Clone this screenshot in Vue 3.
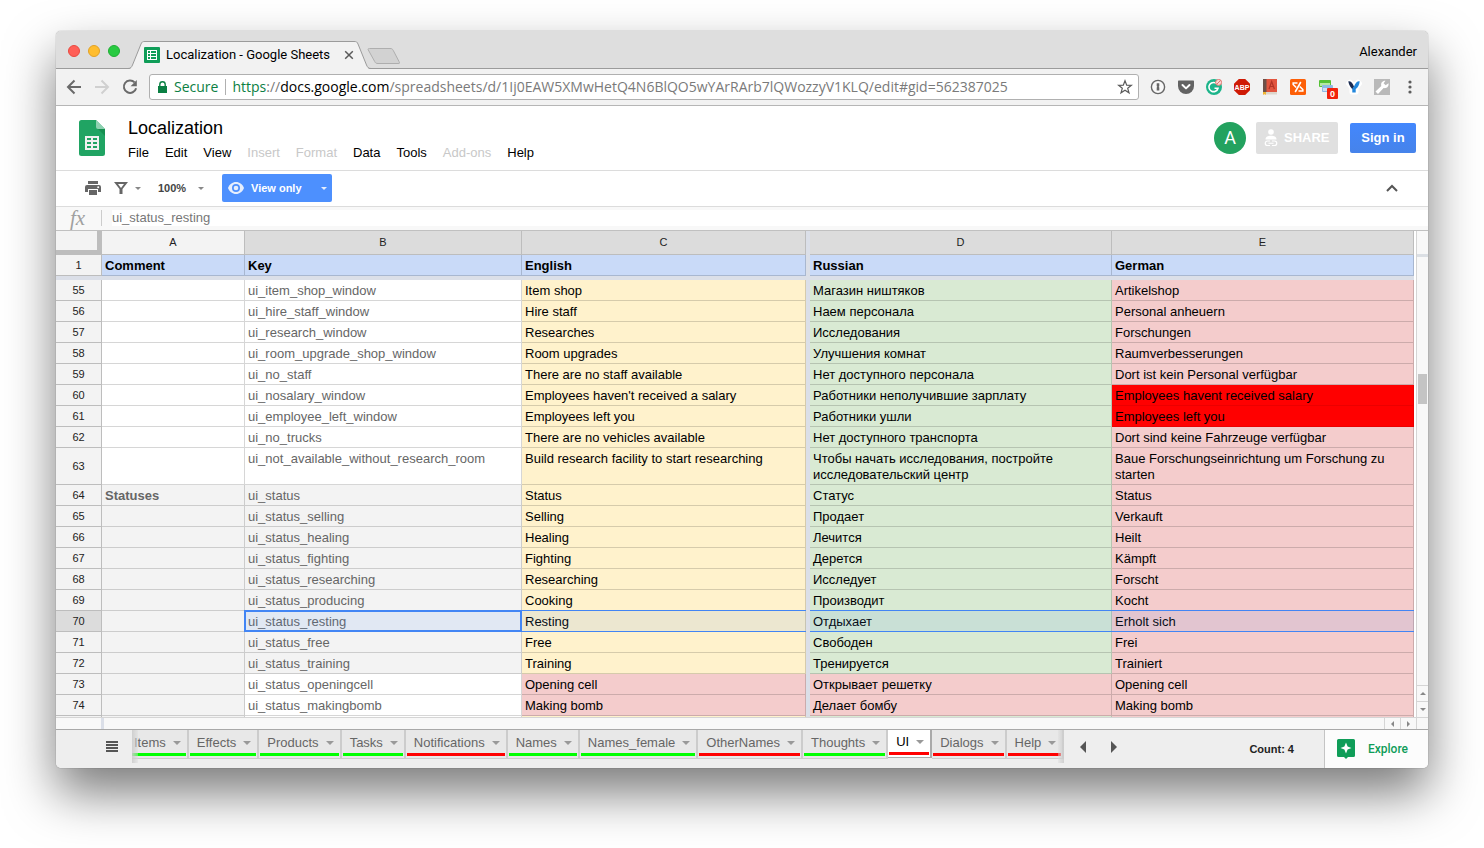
<script setup>
import { ref } from 'vue'

const Y = 'yellow', G = 'green', P = 'pink', R = 'red', N = 'grey', W = 'white'

const rows = [
  [55, '', 'ui_item_shop_window', 'Item shop', 'Магазин ништяков', 'Artikelshop', W, W, Y, G, P],
  [56, '', 'ui_hire_staff_window', 'Hire staff', 'Наем персонала', 'Personal anheuern', W, W, Y, G, P],
  [57, '', 'ui_research_window', 'Researches', 'Исследования', 'Forschungen', W, W, Y, G, P],
  [58, '', 'ui_room_upgrade_shop_window', 'Room upgrades', 'Улучшения комнат', 'Raumverbesserungen', W, W, Y, G, P],
  [59, '', 'ui_no_staff', 'There are no staff available', 'Нет доступного персонала', 'Dort ist kein Personal verfügbar', W, W, Y, G, P],
  [60, '', 'ui_nosalary_window', "Employees haven't received a salary", 'Работники неполучившие зарплату', 'Employees havent received salary', W, W, Y, G, R],
  [61, '', 'ui_employee_left_window', 'Employees left you', 'Работники ушли', 'Employees left you', W, W, Y, G, R],
  [62, '', 'ui_no_trucks', 'There are no vehicles available', 'Нет доступного транспорта', 'Dort sind keine Fahrzeuge verfügbar', W, W, Y, G, P],
  [63, '', 'ui_not_available_without_research_room', 'Build research facility to start researching', 'Чтобы начать исследования, постройте исследовательский центр', 'Baue Forschungseinrichtung um Forschung zu starten', W, W, Y, G, P],
  [64, 'Statuses', 'ui_status', 'Status', 'Статус', 'Status', N, N, Y, G, P],
  [65, '', 'ui_status_selling', 'Selling', 'Продает', 'Verkauft', N, N, Y, G, P],
  [66, '', 'ui_status_healing', 'Healing', 'Лечится', 'Heilt', N, N, Y, G, P],
  [67, '', 'ui_status_fighting', 'Fighting', 'Дерется', 'Kämpft', N, N, Y, G, P],
  [68, '', 'ui_status_researching', 'Researching', 'Исследует', 'Forscht', N, N, Y, G, P],
  [69, '', 'ui_status_producing', 'Cooking', 'Производит', 'Kocht', N, N, Y, G, P],
  [70, '', 'ui_status_resting', 'Resting', 'Отдыхает', 'Erholt sich', N, N, Y, G, P],
  [71, '', 'ui_status_free', 'Free', 'Свободен', 'Frei', N, N, Y, G, P],
  [72, '', 'ui_status_training', 'Training', 'Тренируется', 'Trainiert', N, N, Y, G, P],
  [73, '', 'ui_status_openingcell', 'Opening cell', 'Открывает решетку', 'Opening cell', N, W, P, P, P],
  [74, '', 'ui_status_makingbomb', 'Making bomb', 'Делает бомбу', 'Making bomb', N, W, P, P, P],
].map(([n, ...c]) => ({ n, text: c.slice(0, 5), fill: c.slice(5) }))

const menus = [
  ['File'], ['Edit'], ['View'], ['Insert', true], ['Format', true],
  ['Data'], ['Tools'], ['Add-ons', true], ['Help'],
]

const sheets = [
  ['Items', 'lime'], ['Effects', 'lime'], ['Products', 'lime'], ['Tasks', 'lime'],
  ['Notifications', 'crimson'], ['Names', 'lime'], ['Names_female', 'lime'],
  ['OtherNames', 'crimson'], ['Thoughts', 'lime'], ['UI', 'crimson'],
  ['Dialogs', 'crimson'], ['Help', 'crimson'],
]
const activeSheet = ref('UI')
const formula = ref('ui_status_resting')
const zoom = ref('100%')
</script>

<template>
  <div class="desktop">
    <div class="window">
      <header class="titlebar">
        <div class="lights">
          <button class="light close" aria-label="Close window"></button>
          <button class="light mini" aria-label="Minimize window"></button>
          <button class="light full" aria-label="Full screen"></button>
        </div>
        <div class="btab">
          <svg class="btab-shape" width="244" height="28" viewBox="0 0 244 28">
            <path d="M0 28 C3 28 3.500 26 4.500 24 L13 3 C14 .8 14.500 .5 17 .5 H226 C228.500 .5 229 .8 230 3 L238.500 24 C239.500 26 240 28 243 28 Z" fill="#f2f2f2" />
            <path d="M0 27.500 C3 27.500 3.500 26 4.500 24 L13 3 C14 .8 14.500 .5 17 .5 H226 C228.500 .5 229 .8 230 3 L238.500 24 C239.500 26 240 27.500 243 27.500" fill="none" stroke="#9b9b9b" />
          </svg>
          <svg class="favicon" width="16" height="16" viewBox="0 0 16 16">
            <rect width="16" height="16" rx="1" fill="#0f9d58" />
            <path d="M3 3h10v10H3z" fill="#fff" />
            <path d="M4 4h2v2H4zM7 4h5v2H7zM4 7h2v2H4zM7 7h5v2H7zM4 10h2v2H4zM7 10h5v2H7z" fill="#0f9d58" />
          </svg>
          <span class="btab-title">Localization - Google Sheets</span>
          <button class="plain btab-close" aria-label="Close tab">
            <svg width="10" height="10" viewBox="0 0 10 10"><path d="M1.200 1.200l7.600 7.600M8.800 1.200L1.200 8.800" stroke="#5a5a5a" stroke-width="1.500" /></svg>
          </button>
        </div>
        <button class="plain newtab" aria-label="New tab">
          <svg width="34" height="17" viewBox="0 0 34 17"><path d="M2.500.5H23C25 .5 25.500 1 26.300 2.500L32 13.500C33 15.500 32.500 15.500 31 15.500H11C9 15.500 8.500 15 7.700 13.500L1.300 2C.8 1 1 .5 2.500.5z" fill="#d2d2d2" stroke="#aeaeae" /></svg>
        </button>
        <button class="plain profile">Alexander</button>
      </header>

      <div class="navbar">
        <button class="plain nav" aria-label="Back">
          <svg width="16" height="16" viewBox="0 0 16 16"><path d="M15 8H2.500M8.500 1.500L2 8l6.500 6.500" fill="none" stroke="#6a6a6a" stroke-width="2" /></svg>
        </button>
        <button class="plain nav" aria-label="Forward">
          <svg width="16" height="16" viewBox="0 0 16 16"><path d="M1 8h12.500M7.500 1.500L14 8l-6.500 6.500" fill="none" stroke="#d0d0d0" stroke-width="2" /></svg>
        </button>
        <button class="plain nav" aria-label="Reload">
          <svg width="16" height="16" viewBox="0 0 16 16"><path d="M12.600 3.400A6.200 6.200 0 1 0 14.100 9.200" fill="none" stroke="#6a6a6a" stroke-width="2" /><path d="M14.800 1v6.200H8.600z" fill="#6a6a6a" /></svg>
        </button>
        <div class="omnibox">
          <svg class="lock" width="9" height="12" viewBox="0 0 9 12"><path d="M0 5h9v7H0z" fill="#0b8043" /><path d="M1.800 5.500V3.500a2.700 2.700 0 0 1 5.400 0v2" fill="none" stroke="#0b8043" stroke-width="1.400" /></svg>
          <span class="secure">Secure</span>
          <div class="url" role="textbox" aria-label="Address" tabindex="0"><span class="scheme">https</span>://<span class="host">docs.google.com</span>/spreadsheets/d/1Ij0EAW5XMwHetQ4N6BlQO5wYArRArb7lQWozzyV1KLQ/edit#gid=562387025</div>
          <button class="plain star" aria-label="Bookmark">
            <svg width="16" height="16" viewBox="0 0 16 16"><path d="M8 1.700l1.700 4.400 4.700.2-3.700 3 1.300 4.500L8 11.200l-4 2.600 1.300-4.500-3.700-3 4.700-.2z" fill="none" stroke="#5a5a5a" stroke-width="1.200" /></svg>
          </button>
        </div>
        <div class="exts">
          <button class="plain ext" aria-label="1Password">
            <svg width="16" height="16" viewBox="0 0 16 16"><circle cx="8" cy="8" r="6.600" fill="#f8f8f8" stroke="#666" stroke-width="1.400" /><path d="M6.700 4.200h2.600v3l-.6.600.6.800v3H6.700v-3l.6-.8-.6-.6z" fill="#666" /></svg>
          </button>
          <button class="plain ext" aria-label="Pocket">
            <svg width="16" height="16" viewBox="0 0 16 16"><path d="M1 1.500h14c.6 0 1 .4 1 1V7a8 8 0 0 1-16 0V2.500c0-.6.4-1 1-1z" fill="#636363" /><path d="M4.500 6l3.500 3.400L11.500 6" fill="none" stroke="#fff" stroke-width="2" stroke-linecap="round" stroke-linejoin="round" /></svg>
          </button>
          <button class="plain ext" aria-label="Grammarly">
            <svg width="16" height="16" viewBox="0 0 16 16"><circle cx="8" cy="8" r="8" fill="#1cb48a" /><path d="M11 5A4.600 4.600 0 1 0 12 9.200H8.500" fill="none" stroke="#fff" stroke-width="1.600" /><circle cx="12.600" cy="3.400" r="3" fill="#fbd5d2" stroke="#e0746e" /><path d="M10.600 5.400l4-4" stroke="#e0746e" /></svg>
          </button>
          <button class="plain ext" aria-label="Adblock Plus">
            <svg width="16" height="16" viewBox="0 0 16 16"><path d="M4.800 0h6.400L16 4.800v6.400L11.200 16H4.800L0 11.200V4.800z" fill="#cf1a05" /><text x="8" y="10.800" text-anchor="middle" class="abp">ABP</text></svg>
          </button>
          <button class="plain ext" aria-label="Dictionary">
            <svg width="16" height="16" viewBox="0 0 16 16"><path d="M1 0h14v13.500H1z" fill="#e2553f" /><path d="M1 0h3.500v13.500H1z" fill="#6d5048" /><path d="M1 13h14v2.500H2z" fill="#ddd6cc" /><path d="M1 13h3v3l-1.500-1L1 16z" fill="#f2b632" /><path d="M7 10l2.700-7.500L12.400 10M8 7.500h3.500" fill="none" stroke="#b23325" stroke-width="1.200" /></svg>
          </button>
          <button class="plain ext" aria-label="Share link">
            <svg width="16" height="16" viewBox="0 0 16 16"><rect width="16" height="16" rx="1.500" fill="#fd5f07" /><path d="M7.500 4H3.200v1.500l3 3M8.500 12h4.300v-1.500l-3-3M10.800 3l-5.600 10" fill="none" stroke="#fff" stroke-width="1.600" /></svg>
          </button>
          <button class="plain ext" aria-label="Tab counter">
            <svg width="20" height="20" viewBox="0 0 20 20"><rect x="1" y="1" width="12" height="7" rx="1" fill="#56c136" /><rect x="2" y="4" width="10" height="3" fill="#b5e8a2" /><rect x="4" y="6" width="11" height="7" rx="1" fill="#8fb9e4" /><rect x="5" y="9" width="9" height="3" fill="#cfe1f6" /><rect x="9" y="9" width="11" height="11" rx="1" fill="#f2220b" /><text x="14.500" y="18" text-anchor="middle" class="cnt">0</text></svg>
          </button>
          <button class="plain ext" aria-label="Fork">
            <svg width="16" height="16" viewBox="0 0 16 16"><path d="M4 2.500l4 3.500 4-3.500 2 2-3.500 4.500v4.500h-5V9L2 4.500z" fill="#fff" stroke="#fff" stroke-width="4" stroke-linejoin="round" /><path d="M2.300 2.500C4 1.800 6.500 3.500 8 7.500L7 10.500C5 9 3 6.500 2.300 2.500z" fill="#1b2c52" /><path d="M13.700 2.500C12 1.800 9.500 3.500 8 7.500L6.300 9.500V13.500h3.400V10C12 8.500 13.200 6 13.700 2.500z" fill="#2387dc" /></svg>
          </button>
          <button class="plain ext" aria-label="Developer tools">
            <svg width="16" height="16" viewBox="0 0 16 16"><rect width="16" height="16" fill="#b9b9b9" /><path d="M1.500 12.500L7.300 7C6.500 4 8.500 1.500 11.500 1.800L9.600 4.200l2 2 2.900-2c.6 3.300-1.900 5.500-4.900 4.800L4 15z" fill="#fff" /></svg>
          </button>
          <button class="plain ext" aria-label="Menu">
            <svg width="16" height="16" viewBox="0 0 16 16"><g fill="#5c5c5c"><circle cx="8" cy="3" r="1.600" /><circle cx="8" cy="8" r="1.600" /><circle cx="8" cy="13" r="1.600" /></g></svg>
          </button>
        </div>
      </div>

      <div class="dochead">
        <svg class="logo" width="26" height="36" viewBox="0 0 26 36">
          <path d="M2.500 0H17l9 9v24.500a2.500 2.500 0 0 1-2.500 2.500h-21A2.500 2.500 0 0 1 0 33.500v-31A2.500 2.500 0 0 1 2.500 0z" fill="#20a463" />
          <path d="M17 0l9 9h-7a2 2 0 0 1-2-2z" fill="#8ed1b1" />
          <path d="M19 9h7v7z" fill="#158f50" />
          <path d="M6 16h14v14H6z" fill="#f1f1f1" />
          <path d="M8 18h4v2H8zM14 18h4v2h-4zM8 22h4v2H8zM14 22h4v2h-4zM8 26h4v2H8zM14 26h4v2h-4z" fill="#20a463" />
        </svg>
        <div class="doc">
          <h1>Localization</h1>
          <nav class="menus">
            <button v-for="[name, off] in menus" :key="name" class="plain menu" :disabled="off">{{ name }}</button>
          </nav>
        </div>
        <div class="actions">
          <button class="plain avatar" aria-label="Account">A</button>
          <button class="plain share" disabled>
            <svg width="14" height="18" viewBox="0 0 14 18"><g fill="#fff"><circle cx="7" cy="3" r="2.800" /><path d="M1.500 10.500C1.500 7.800 4 6.800 7 6.800s5.500 1 5.500 3.700z" /></g><path d="M6 12H3.500a2 2 0 0 0 0 4.500H6M8 12h2.500a2 2 0 0 1 0 4.500H8M4.500 14.250h5" fill="none" stroke="#fff" stroke-width="1.200" /></svg>
            SHARE
          </button>
          <button class="plain signin">Sign in</button>
        </div>
      </div>

      <div class="toolbar">
        <button class="plain print" aria-label="Print">
          <svg width="16" height="16" viewBox="0 0 16 16"><path d="M3 1h10v3H3zM2 5h12a2 2 0 0 1 2 2v5h-3V9H3v3H0V7a2 2 0 0 1 2-2z" fill="#666" /><path d="M4 10h8v5H4z" fill="#666" /><circle cx="13.200" cy="7.300" r="1" fill="#fff" /></svg>
        </button>
        <button class="plain filter" aria-label="Filter">
          <svg width="14" height="14" viewBox="0 0 14 14"><path d="M0 1h14L8.500 8v5h-3V8zM4 3l3 4L10 3z" fill="#666" fill-rule="evenodd" /></svg>
          <span class="caret"></span>
        </button>
        <label class="zoom">
          <select v-model="zoom" aria-label="Zoom"><option>100%</option></select>
          <span class="caret"></span>
        </label>
        <button class="plain viewonly">
          <svg width="16" height="12" viewBox="0 0 16 12"><path d="M8 0c3.600 0 6.700 2.500 8 6-1.300 3.500-4.400 6-8 6S1.300 9.500 0 6c1.300-3.500 4.400-6 8-6z" fill="#e6eefc" /><circle cx="8" cy="6" r="4" fill="#4d90fe" /><circle cx="8" cy="6" r="2.300" fill="#e6eefc" /></svg>
          <span>View only</span>
          <span class="caret light-caret"></span>
        </button>
        <button class="plain collapse" aria-label="Hide menus">
          <svg width="12" height="8" viewBox="0 0 12 8"><path d="M1 7l5-5 5 5" fill="none" stroke="#555" stroke-width="2" /></svg>
        </button>
      </div>

      <div class="fxbar">
        <label class="fx" for="formula">fx</label>
        <input id="formula" v-model="formula" type="text" />
      </div>

      <div class="grid">
        <table>
          <colgroup>
            <col class="w-n" /><col class="w-a" /><col class="w-b" /><col class="w-c" /><col class="w-f" /><col class="w-d" /><col />
          </colgroup>
          <thead>
            <tr class="letters">
              <th class="corner" aria-label="Select all"></th>
              <th>A</th>
              <th class="sel">B</th>
              <th class="sel">C</th>
              <td class="freeze"></td>
              <th class="sel">D</th>
              <th class="sel">E</th>
            </tr>
            <tr class="frozen">
              <th class="num">1</th>
              <td>Comment</td><td>Key</td><td>English</td>
              <td class="freeze"></td>
              <td>Russian</td><td>German</td>
            </tr>
            <tr class="freeze-row"><td colspan="7"></td></tr>
          </thead>
          <tbody>
            <tr v-for="r in rows" :key="r.n" :class="{ current: r.n === 70 }">
              <th class="num">{{ r.n }}</th>
              <td class="note" :class="r.fill[0]">{{ r.text[0] }}</td>
              <td class="key" :class="r.fill[1]">{{ r.text[1] }}</td>
              <td class="lang" :class="r.fill[2]">{{ r.text[2] }}</td>
              <td class="freeze"></td>
              <td class="lang" :class="r.fill[3]">{{ r.text[3] }}</td>
              <td class="lang" :class="r.fill[4]">{{ r.text[4] }}</td>
            </tr>
            <tr class="peek">
              <th class="num"></th>
              <td class="grey"></td><td class="white"></td><td class="yellow"></td>
              <td class="freeze"></td>
              <td class="green"></td><td class="pink"></td>
            </tr>
          </tbody>
        </table>
        <div class="vscroll">
          <div class="vtrack"><div class="vthumb"></div></div>
          <button class="plain sbtn" aria-label="Scroll up"><span class="tri up"></span></button>
          <button class="plain sbtn" aria-label="Scroll down"><span class="tri down"></span></button>
        </div>
      </div>

      <div class="hscroll">
        <span class="hfreeze"></span>
        <button class="plain hbtn" aria-label="Scroll left"><span class="tri left"></span></button>
        <button class="plain hbtn" aria-label="Scroll right"><span class="tri right"></span></button>
        <span class="hend"></span>
      </div>

      <footer class="bottom">
        <button class="plain allsheets" aria-label="All sheets">
          <svg width="12" height="12" viewBox="0 0 12 12"><path d="M0 0h12v2H0zM0 3h12v2H0zM0 6h12v2H0zM0 9h12v2H0z" fill="#555" /></svg>
        </button>
        <div class="strip">
          <div class="tabs">
            <button
              v-for="[name, bar] in sheets"
              :key="name"
              class="plain sheet"
              :class="[bar, { active: name === activeSheet }]"
              @click="activeSheet = name"
            >{{ name }}<span class="tabcaret"></span></button>
          </div>
        </div>
        <button class="plain step" aria-label="Previous sheets"><span class="step-tri prev"></span></button>
        <button class="plain step" aria-label="Next sheets"><span class="step-tri next"></span></button>
        <button class="plain count">Count: 4</button>
        <button class="plain explore">
          <svg width="18" height="20" viewBox="0 0 18 20"><path d="M1.500 0h15A1.500 1.500 0 0 1 18 1.500v15a1.500 1.500 0 0 1-1.500 1.500H11l-2 2-2-2H1.500A1.500 1.500 0 0 1 0 16.500v-15A1.500 1.500 0 0 1 1.500 0z" fill="#0f9d58" /><path d="M9 3.500l1.600 3.900L14.500 9l-3.900 1.600L9 14.500l-1.600-3.900L3.500 9l3.900-1.600z" fill="#fff" /></svg>
          Explore
        </button>
      </footer>
    </div>
  </div>
</template>

<style>
body {
  margin: 0;
  background: #fff;
}
</style>

<style scoped>
* {
  box-sizing: border-box;
}
.desktop {
  padding: 31px 56px 80px;
  font: 13px/16px "Liberation Sans", Arial, sans-serif;
  color: #000;
  overflow: hidden;
}
.window {
  border-radius: 5px;
  box-shadow: 0 0 1px rgba(0, 0, 0, 0.6), 0 25px 50px rgba(0, 0, 0, 0.52);
  background: #fff;
}
.plain {
  border: 0;
  padding: 0;
  margin: 0;
  background: none;
  font: inherit;
  color: inherit;
}
svg {
  display: block;
  flex: none;
}

/* browser chrome */
.titlebar {
  display: flex;
  height: 38px;
  background: #dedede;
  border-bottom: 1px solid #9b9b9b;
  border-radius: 5px 5px 0 0;
}
.lights {
  display: flex;
  gap: 8px;
  padding: 14px 8px 0 12px;
}
.light {
  width: 12px;
  height: 12px;
  padding: 0;
  border: 1px solid;
  border-radius: 50%;
}
.close { background: #ff5f57; border-color: #e9493f; }
.mini { background: #ffbd2e; border-color: #e2a125; }
.full { background: #28ca41; border-color: #1fae34; }
.btab {
  position: relative;
  z-index: 1;
  display: flex;
  align-items: center;
  width: 244px;
  height: 28px;
  margin-top: 10px;
  padding-left: 16px;
}
.btab-shape {
  position: absolute;
  left: 0;
  top: 0;
}
.favicon {
  position: relative;
}
.btab-title {
  position: relative;
  flex: 1;
  margin-left: 6px;
  font: 13px/16px Roboto, sans-serif;
  white-space: nowrap;
}
.btab-close {
  position: relative;
  margin-right: 18px;
}
.newtab {
  margin: 17px 0 0 -5px;
  align-self: flex-start;
}
.profile {
  margin: 4px 11px 0 auto;
  font: 13px/16px Roboto, sans-serif;
}
.navbar {
  display: flex;
  align-items: center;
  height: 37px;
  padding: 0 10px;
  background: #f2f2f2;
  border-bottom: 1px solid #b6b6b6;
}
.nav {
  margin-right: 12px;
}
.omnibox {
  flex: 1;
  display: flex;
  align-items: center;
  min-width: 0;
  height: 26px;
  margin: 0 11px 0 -1px;
  padding: 0 5px 0 8px;
  background: #fff;
  border: 1px solid #b0b0b0;
  border-radius: 3px;
  font: 14px/20px "Open Sans", Roboto, sans-serif;
}
.secure {
  margin: 0 6px 0 7px;
  padding-right: 7px;
  line-height: 16px;
  color: #0b8043;
  border-right: 1px solid #b0b0b0;
}
.url {
  flex: 1;
  min-width: 0;
  overflow: hidden;
  white-space: nowrap;
  color: #7a7a7a;
}
.scheme { color: #0b8043; }
.host { color: #000; }
.exts {
  display: flex;
  gap: 12px;
}
.ext {
  width: 16px;
  height: 16px;
}
.abp {
  font: bold 7px "Liberation Sans", sans-serif;
  fill: #fff;
}
.cnt {
  font: bold 9px "Liberation Sans", sans-serif;
  fill: #fff;
}

/* document header */
.dochead {
  display: flex;
  align-items: center;
  height: 65px;
  padding: 0 12px 0 23px;
  border-bottom: 1px solid #dcdcdc;
}
.doc {
  margin: 0 auto 0 23px;
}
h1 {
  margin: 1px 0 5px;
  font-size: 18px;
  line-height: 24px;
  font-weight: normal;
}
.menus {
  display: flex;
  gap: 16px;
}
.menu:disabled {
  color: #c8c8c8;
}
.actions {
  display: flex;
  align-items: center;
}
.avatar {
  width: 32px;
  height: 32px;
  margin-right: 10px;
  border-radius: 50%;
  background: #23a25f;
  color: #fff;
  font: 18px/32px Roboto, sans-serif;
}
.share {
  display: flex;
  align-items: center;
  gap: 6px;
  width: 82px;
  height: 32px;
  margin-right: 12px;
  padding: 0 8px;
  border-radius: 2px;
  background: #e0e0e0;
  color: #fff;
  font-weight: bold;
}
.signin {
  width: 66px;
  height: 30px;
  border-radius: 2px;
  background: linear-gradient(#4387fd, #4683ea);
  color: #fff;
  font-weight: bold;
}

/* toolbar */
.toolbar {
  display: flex;
  align-items: center;
  height: 36px;
  padding: 0 30px 1px 29px;
  border-bottom: 1px solid #dcdcdc;
  font-size: 11px;
  font-weight: bold;
}
.caret {
  width: 0;
  height: 0;
  border: 3px solid transparent;
  border-top-color: #888;
  border-bottom: 0;
}
.filter {
  display: flex;
  align-items: center;
  gap: 7px;
  margin: 0 17px 0 13px;
}
.zoom {
  display: flex;
  align-items: center;
}
.zoom select {
  appearance: none;
  width: 40px;
  padding: 0;
  border: 0;
  background: none;
  font: inherit;
  color: #444;
}
.viewonly {
  display: flex;
  align-items: center;
  gap: 7px;
  width: 110px;
  height: 28px;
  margin-left: 18px;
  padding: 0 5px 0 6px;
  border-radius: 2px;
  background: #4d90fe;
  color: #fff;
}
.light-caret {
  margin-left: auto;
  border-top-color: #e6eefc;
}
.collapse {
  margin-left: auto;
}
.fxbar {
  display: flex;
  align-items: center;
  height: 24px;
  padding-bottom: 1px;
  background: #f8f8f8;
  border-bottom: 1px solid #c0c0c0;
}
.fx {
  width: 46px;
  height: 16px;
  padding-left: 14px;
  border-right: 1px solid #ccc;
  font: italic 21px/16px "Liberation Serif", serif;
  color: #a0a0a0;
}
.fxbar input {
  flex: 1;
  height: 16px;
  margin-left: 10px;
  padding: 0;
  border: 0;
  outline: 0;
  background: #fff;
  font: inherit;
  color: #777;
}

/* spreadsheet */
.grid {
  display: flex;
}
table {
  flex: 1;
  width: 0;
  table-layout: fixed;
  border-spacing: 0;
}
.w-n { width: 46px; }
.w-a { width: 143px; }
.w-b { width: 277px; }
.w-c { width: 284px; }
.w-f { width: 4px; }
.w-d { width: 302px; }
td {
  padding: 3px 3px 1px;
  border: 0 solid rgba(0, 0, 0, 0.16);
  border-width: 0 1px 1px 0;
  vertical-align: top;
}
th {
  padding: 0;
  font-size: 11px;
  font-weight: normal;
  color: #222;
  background: #f3f3f3;
  border: 0 solid #bdbdbd;
  border-width: 0 1px 1px 0;
}
.letters th {
  height: 24px;
  padding-bottom: 2px;
}
.letters .sel {
  background: #dcdcdc;
}
.letters .corner {
  border-right: 5px solid #bdbdbd;
  border-bottom: 5px solid #bdbdbd;
}
.freeze {
  padding: 0;
  border: 0;
  background: #dbdfe8;
}
.frozen td:not(.freeze) {
  background: #c9daf8;
  font-weight: bold;
}
.freeze-row td {
  height: 4px;
  padding: 0;
  border: 0;
  background: #dbdfe8;
}
.note {
  font-weight: bold;
  color: #666;
}
.key { color: #666; }
.white { background: #fff; }
.grey { background: #f3f3f3; }
.yellow { background: #fff2cc; }
.green { background: #d9ead3; }
.pink { background: #f4cccc; }
.red {
  background: #f00;
  border-color: rgba(0, 0, 0, 0.08);
}
.current .num {
  background: #dcdcdc;
}
.current .key,
.current .lang {
  position: relative;
}
.current .key::after,
.current .lang::after {
  content: "";
  position: absolute;
  inset: -1px -1px -1px 0;
  border: solid #4285f4;
  border-width: 1px 0;
  background: rgba(66, 133, 244, 0.1);
}
.current .key::after {
  inset: -1px -1px -1px -1px;
  border-width: 2px;
}
.peek td,
.peek th {
  height: 1px;
  padding: 0;
  border-bottom: 0;
}
.vscroll {
  display: flex;
  flex-direction: column;
  width: 12px;
  margin-left: 2px;
  border-left: 1px solid #d5d5d5;
  background: #f8f8f8;
}
.vtrack {
  flex: 1;
  margin-top: 23px;
  padding: 117px 0 0 1px;
  border-top: 3px solid #dbdfe4;
}
.vthumb {
  width: 9px;
  height: 30px;
  background: #c4c4c4;
}
.sbtn {
  display: flex;
  align-items: center;
  justify-content: center;
  height: 16px;
  border-top: 1px solid #d5d5d5;
}
.tri {
  width: 0;
  height: 0;
  border: 3px solid transparent;
}
.tri.up { border-top: 0; border-bottom-color: #888; }
.tri.down { border-bottom: 0; border-top-color: #888; }
.tri.left { border-left: 0; border-right-color: #888; }
.tri.right { border-right: 0; border-left-color: #888; }
.hscroll {
  display: flex;
  height: 13px;
  padding-left: 45px;
  border-top: 1px solid #d5d5d5;
  border-bottom: 1px solid #a8a8a8;
  background: #f8f8f8;
}
.hfreeze {
  width: 3px;
  margin-right: auto;
  background: #dbdfe8;
}
.hbtn {
  display: flex;
  align-items: center;
  justify-content: center;
  width: 16px;
  border-left: 1px solid #d5d5d5;
}
.hend {
  width: 12px;
  border-left: 1px solid #d5d5d5;
}

/* sheet tabs */
.bottom {
  display: flex;
  height: 38px;
  background: #eee;
  border-radius: 0 0 5px 5px;
}
.allsheets {
  width: 76px;
  padding: 11px 0 15px 50px;
}
.strip {
  position: relative;
  flex: 1;
  min-width: 0;
  overflow: hidden;
}
.strip::before,
.strip::after {
  content: "";
  position: absolute;
  z-index: 2;
  top: 0;
  left: 0;
  width: 6px;
  height: 33px;
  background: linear-gradient(90deg, rgba(205, 205, 205, 0.9), rgba(220, 220, 220, 0.4));
}
.strip::after {
  left: auto;
  right: 0;
  background: linear-gradient(270deg, rgba(205, 205, 205, 0.9), rgba(220, 220, 220, 0.4));
}
.tabs {
  display: flex;
  margin-left: -6px;
}
.sheet {
  position: relative;
  flex: none;
  display: flex;
  align-items: center;
  height: 29px;
  padding: 0 6px 3px 8px;
  background: #e8e8e8;
  border-right: 2px solid #ccc;
  border-bottom: 1px solid #ccc;
  color: #666;
}
.sheet::after {
  content: "";
  position: absolute;
  left: 1px;
  right: 1px;
  bottom: 2px;
  height: 3px;
}
.lime::after { background: #0f0; }
.crimson::after { background: #f00; }
.sheet.active {
  height: 28px;
  padding-bottom: 4px;
  background: #fff;
  border-color: #aaa;
  color: #000;
}
.tabcaret {
  width: 0;
  height: 0;
  margin-left: 7px;
  border: 4px solid transparent;
  border-top-color: #999;
  border-bottom: 0;
}
.step {
  display: flex;
  align-items: center;
  justify-content: center;
  width: 31px;
  height: 33px;
}
.strip + .step {
  margin-left: 3px;
}
.step-tri {
  width: 0;
  height: 0;
  border: 6px solid transparent;
}
.prev { border-left: 0; border-right-color: #555; }
.next { border-right: 0; border-left-color: #555; }
.count {
  margin: 0 30px 0 120px;
  font-size: 11px;
  font-weight: bold;
  color: #222;
}
.explore {
  display: flex;
  align-items: center;
  gap: 13px;
  width: 104px;
  padding: 0 0 0 12px;
  border-left: 1px solid #c4c4c4;
  border-radius: 0 0 5px 0;
  background: #fcfcfc;
  font: 500 12px/16px Roboto, sans-serif;
  color: #0f9d58;
}
</style>
